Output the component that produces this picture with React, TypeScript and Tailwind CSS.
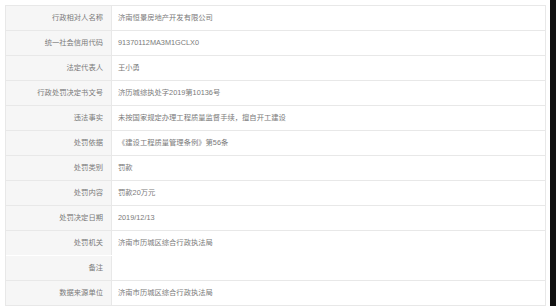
const rows: { label: string; value: string; noLine?: boolean }[] = [
    { label: "行政相对人名称", value: "济南恒景房地产开发有限公司" },
    { label: "统一社会信用代码", value: "91370112MA3M1GCLX0" },
    { label: "法定代表人", value: "王小勇" },
    { label: "行政处罚决定书文号", value: "济历城综执处字2019第10136号" },
    { label: "违法事实", value: "未按国家规定办理工程质量监督手续，擅自开工建设" },
    { label: "处罚依据", value: "《建设工程质量管理条例》第56条" },
    { label: "处罚类别", value: "罚款" },
    { label: "处罚内容", value: "罚款20万元" },
    { label: "处罚决定日期", value: "2019/12/13" },
    { label: "处罚机关", value: "济南市历城区综合行政执法局", noLine: true },
    { label: "备注", value: "" },
    { label: "数据来源单位", value: "济南市历城区综合行政执法局" },
]

const InfoRow = ({ label, value, noLine }: { label: string; value: string; noLine?: boolean }) => {
    return (
        <div className={`grid grid-cols-[106px_1fr] h-[25px] ${noLine ? "border-b border-b-transparent" : "border-b border-[#e8e8e8]"}`}>
            <div className="bg-[#f6f6f6] border-r border-[#e8e8e8] flex items-center justify-end pr-[8px] text-[#7a7a7a]">{label}</div>
            <div className="flex items-center pl-[6px] text-[#7a7a7a] whitespace-nowrap">{value}</div>
        </div>
    )
}

export default function App() {
    return (
        <div className="w-[556px] h-[306px] bg-white flex overflow-hidden text-[7.3px] font-['Liberation_Sans','Noto_Sans_CJK_SC',sans-serif]">
            <div className="w-[550px] pl-[5px] pr-[4px] pt-[5px]">
                <div className="border-l border-t border-r border-[#e8e8e8]">
                    {rows.map((r, i) => <InfoRow key={i} {...r} />)}
                </div>
            </div>
            <div className="w-[6px] h-full bg-[#111]" />
        </div>
    )
}
